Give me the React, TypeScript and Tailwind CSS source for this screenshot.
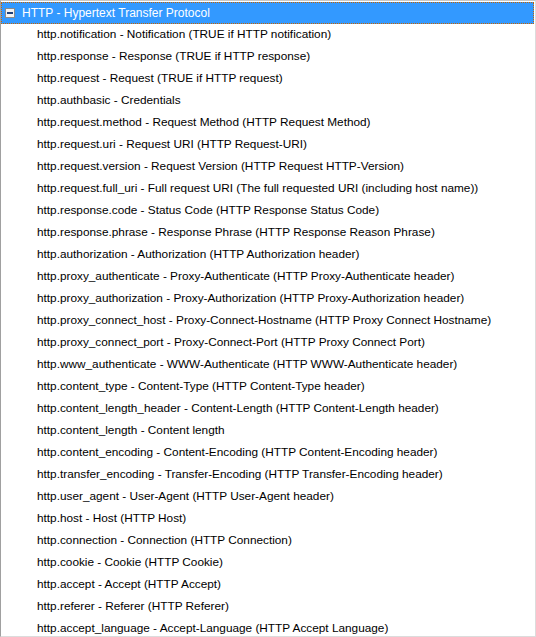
const fields = [
  'http.notification - Notification (TRUE if HTTP notification)',
  'http.response - Response (TRUE if HTTP response)',
  'http.request - Request (TRUE if HTTP request)',
  'http.authbasic - Credentials',
  'http.request.method - Request Method (HTTP Request Method)',
  'http.request.uri - Request URI (HTTP Request-URI)',
  'http.request.version - Request Version (HTTP Request HTTP-Version)',
  'http.request.full_uri - Full request URI (The full requested URI (including host name))',
  'http.response.code - Status Code (HTTP Response Status Code)',
  'http.response.phrase - Response Phrase (HTTP Response Reason Phrase)',
  'http.authorization - Authorization (HTTP Authorization header)',
  'http.proxy_authenticate - Proxy-Authenticate (HTTP Proxy-Authenticate header)',
  'http.proxy_authorization - Proxy-Authorization (HTTP Proxy-Authorization header)',
  'http.proxy_connect_host - Proxy-Connect-Hostname (HTTP Proxy Connect Hostname)',
  'http.proxy_connect_port - Proxy-Connect-Port (HTTP Proxy Connect Port)',
  'http.www_authenticate - WWW-Authenticate (HTTP WWW-Authenticate header)',
  'http.content_type - Content-Type (HTTP Content-Type header)',
  'http.content_length_header - Content-Length (HTTP Content-Length header)',
  'http.content_length - Content length',
  'http.content_encoding - Content-Encoding (HTTP Content-Encoding header)',
  'http.transfer_encoding - Transfer-Encoding (HTTP Transfer-Encoding header)',
  'http.user_agent - User-Agent (HTTP User-Agent header)',
  'http.host - Host (HTTP Host)',
  'http.connection - Connection (HTTP Connection)',
  'http.cookie - Cookie (HTTP Cookie)',
  'http.accept - Accept (HTTP Accept)',
  'http.referer - Referer (HTTP Referer)',
  'http.accept_language - Accept-Language (HTTP Accept Language)',
];

const App = () => {
  return (
    <div className="w-[536px] h-[637px] bg-white overflow-hidden border-l border-t border-l-[#a0a0a0] border-t-[#c8c8c8] border-r border-b border-r-[#dcdcdc] border-b-[#dcdcdc] font-['Liberation_Sans',sans-serif] text-[11.8px]">
      <div className="pt-px pr-px">
        {/* Protocol header (selected) */}
        <div className="h-[22px] flex items-center bg-[#3399ff] border border-dotted border-[#c86400] text-white">
          <div className="ml-[3px] w-[10px] h-[10px] border border-[#8a8a8a] bg-[#f4f4f4] flex items-center justify-center">
            <div className="w-[6px] h-[2px] bg-[#1e3f78]"></div>
          </div>
          <span className="ml-[7px] text-[12px] leading-none">HTTP - Hypertext Transfer Protocol</span>
        </div>

        {/* Fields */}
        {fields.map((f) => (
          <div key={f} className="h-[22px] flex items-center pl-[36px] text-black whitespace-nowrap leading-none">
            {f}
          </div>
        ))}
      </div>
    </div>
  );
};

export default App;
